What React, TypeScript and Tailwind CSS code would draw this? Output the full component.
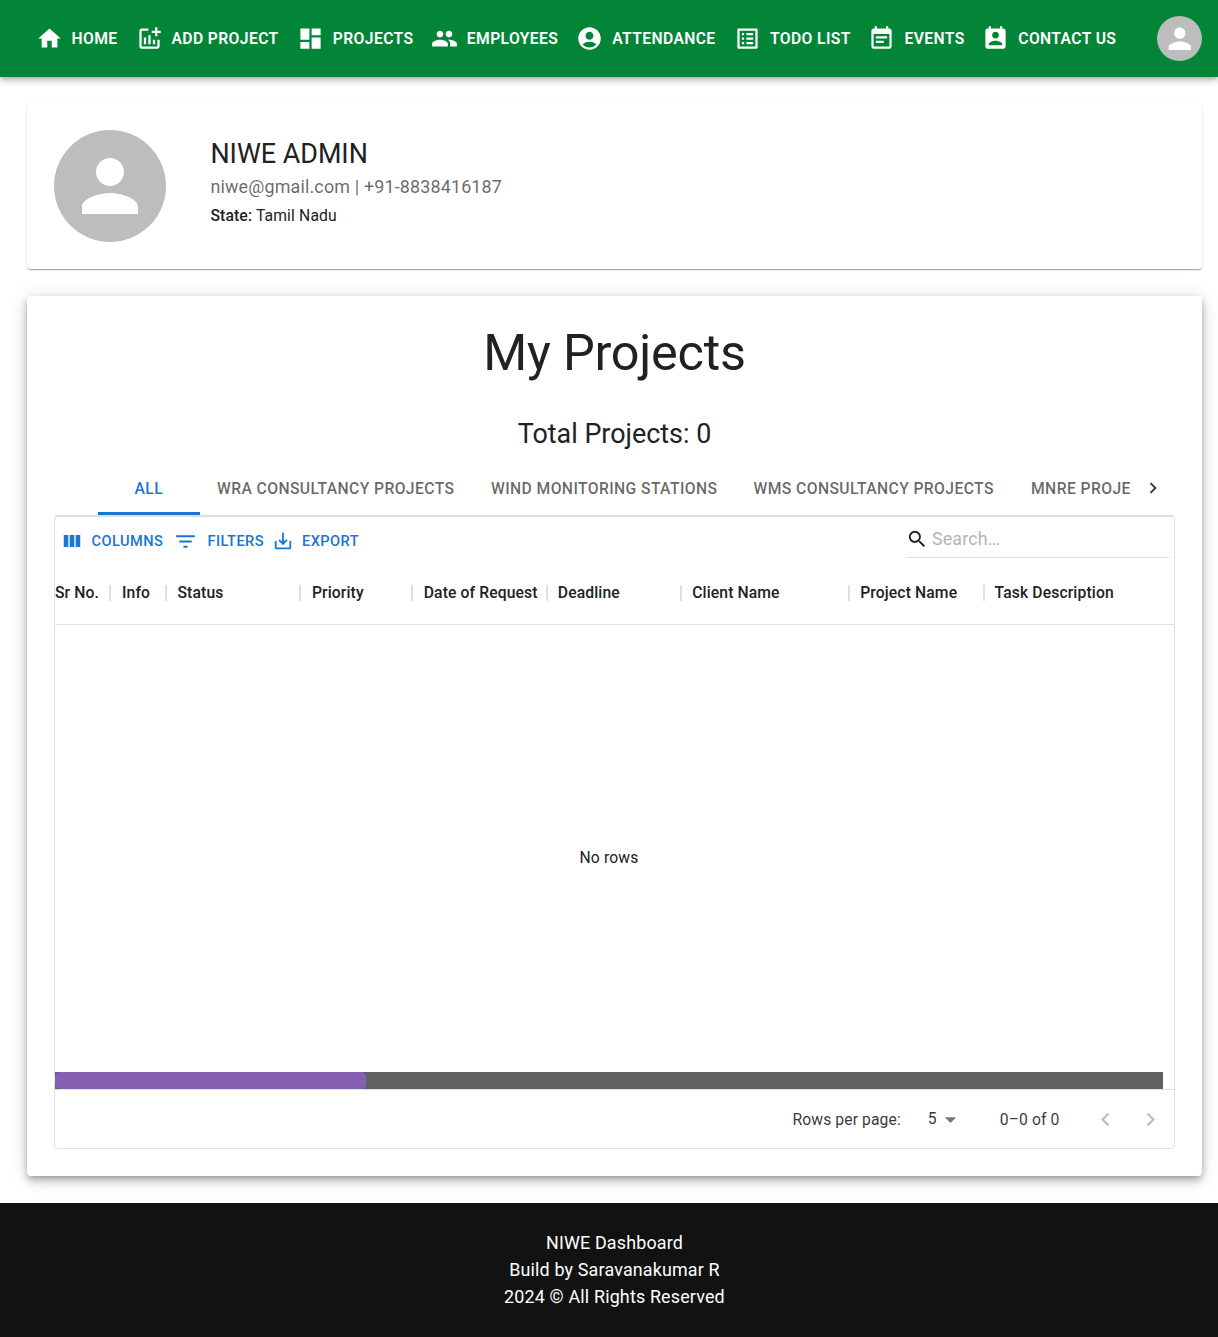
import {
  MdAccountCircle,
  MdAddchart,
  MdArrowDropDown,
  MdDashboard,
  MdEventNote,
  MdFilterList,
  MdHome,
  MdKeyboardArrowLeft,
  MdKeyboardArrowRight,
  MdListAlt,
  MdPeople,
  MdPermContactCalendar,
  MdPerson,
  MdSaveAlt,
  MdSearch,
} from "react-icons/md";

const navItems = [
  { label: "HOME", Icon: MdHome, width: "w-[100px]" },
  { label: "ADD PROJECT", Icon: MdAddchart, width: "w-[161.3px]" },
  { label: "PROJECTS", Icon: MdDashboard, width: "w-[134px]" },
  { label: "EMPLOYEES", Icon: MdPeople, width: "w-[145.4px]" },
  { label: "ATTENDANCE", Icon: MdAccountCircle, width: "w-[157.8px]" },
  { label: "TODO LIST", Icon: MdListAlt, width: "w-[134.5px]" },
  { label: "EVENTS", Icon: MdEventNote, width: "w-[113.8px]" },
  { label: "CONTACT US", Icon: MdPermContactCalendar, width: "w-[140px]" },
];

const tabs = [
  { label: "WRA CONSULTANCY PROJECTS", width: "w-[274px]" },
  { label: "WIND MONITORING STATIONS", width: "w-[262.5px]" },
  { label: "WMS CONSULTANCY PROJECTS", width: "w-[277.5px]" },
  { label: "MNRE PROJE", width: "w-[122px]" },
];

const columns = [
  { label: "Sr No.", width: "w-14", pad: "" },
  { label: "Info", width: "w-14", pad: "pl-[11px]" },
  { label: "Status", width: "w-[134.4px]", pad: "pl-[10.5px]" },
  { label: "Priority", width: "w-[112px]", pad: "pl-[10.5px]" },
  { label: "Date of Request", width: "w-[134.4px]", pad: "pl-[10.3px]" },
  { label: "Deadline", width: "w-[134.4px]", pad: "pl-[10px]" },
  { label: "Client Name", width: "w-[168px]", pad: "pl-[10px]" },
  { label: "Project Name", width: "w-[134.4px]", pad: "pl-[10px]" },
  { label: "Task Description", width: "w-[336px]", pad: "pl-[10px]" },
];

function ColumnsIcon() {
  return (
    <svg viewBox="0 0 24 24" className="size-[22px]" fill="currentColor">
      <path d="M3 5.5h5v13H3zM9.5 5.5h5v13h-5zM16 5.5h5v13h-5z" />
    </svg>
  );
}

function NavBar() {
  return (
    <header className="relative z-10 flex h-[77px] items-center bg-[#028536] pl-[35.5px] pr-4 text-white shadow-[0_2px_4px_-1px_rgba(0,0,0,0.2),0_4px_6px_rgba(0,0,0,0.14),0_1px_11px_rgba(0,0,0,0.12)]">
      <nav className="flex flex-1">
        {navItems.map(({ label, Icon, width }) => (
          <a key={label} className={`flex shrink-0 items-center gap-[9px] ${width}`}>
            <Icon className="size-[27px] shrink-0" />
            <span className="whitespace-nowrap text-[15.7px] font-semibold leading-6 tracking-[0.38px]">{label}</span>
          </a>
        ))}
      </nav>
      <div className="flex size-[45px] items-center justify-center rounded-full bg-[#bdbdbd]">
        <MdPerson className="size-[33.6px]" />
      </div>
    </header>
  );
}

function Profile() {
  return (
    <section className="flex h-[165px] rounded bg-white px-[26.6px] py-[26.4px] shadow-[0_2px_1px_-1px_rgba(0,0,0,0.2),0_1px_1px_rgba(0,0,0,0.14),0_1px_3px_rgba(0,0,0,0.12)]">
      <div className="flex size-28 shrink-0 items-center justify-center rounded-full bg-[#bdbdbd] text-white">
        <MdPerson className="size-[84px]" />
      </div>
      <div className="ml-[44.8px] pt-[5.6px]">
        <h1 className="text-[26.9px] leading-9">NIWE ADMIN</h1>
        <p className="text-[17.9px] leading-[30px] tracking-[0.17px] text-black/60">
          niwe@gmail.com | +91-8838416187
        </p>
        <p className="pt-[2px] text-[15.7px] leading-6 tracking-[0.14px]">
          <span className="font-medium">State:</span> Tamil Nadu
        </p>
      </div>
    </section>
  );
}

function Tabs() {
  return (
    <div className="flex h-[55px] items-stretch border-b border-black/12 text-[15.7px] font-medium tracking-[0.4px] text-black/60">
      <div className="ml-11 flex w-[1037px] overflow-hidden whitespace-nowrap">
        <div className="flex w-[101.5px] shrink-0 items-center justify-center border-b-[3px] border-[#1976d2] pt-[5px] text-[#1976d2]">
          ALL
        </div>
        {tabs.map((t) => (
          <div key={t.label} className={`flex shrink-0 items-center pl-[17.5px] pt-[2px] ${t.width}`}>
            {t.label}
          </div>
        ))}
      </div>
      <div className="flex w-11 items-center justify-center text-black/80">
        <MdKeyboardArrowRight className="size-[22px]" />
      </div>
    </div>
  );
}

function Toolbar() {
  return (
    <div className="flex h-11 items-start pl-[5.5px] pr-1 text-[14.6px] font-medium tracking-[0.44px] text-[#1976d2]">
      <button className="mt-[13px] flex h-[22px] w-[112px] items-center gap-[9px] leading-[22px]">
        <ColumnsIcon />
        COLUMNS
      </button>
      <button className="mt-[13px] flex h-[22px] w-[99px] items-center leading-[22px]">
        <MdFilterList className="mr-[10px] size-[25px]" />
        FILTERS
      </button>
      <button className="mt-[13px] flex h-[22px] items-center gap-[8.5px] leading-[22px]">
        <MdSaveAlt className="size-[22px]" />
        EXPORT
      </button>
      <label className="ml-auto flex h-[41px] w-[264px] items-center border-b border-black/12 pt-[3px] text-[17.9px] font-normal tracking-[0.17px] text-black/87">
        <MdSearch className="mt-px size-[22.4px] shrink-0" />
        <input
          placeholder="Search…"
          className="ml-[3.5px] w-full bg-transparent pt-px outline-none placeholder:text-[#b4b4b4]"
        />
      </label>
    </div>
  );
}

function Grid() {
  return (
    <div className="flex h-[633px] flex-col overflow-hidden rounded border border-[#e0e0e0]">
      <Toolbar />
      <div className="flex h-[64px] shrink-0 overflow-hidden border-b border-[#e0e0e0] text-[15.7px] font-medium tracking-[0.12px]">
        {columns.map((c) => (
          <div key={c.label} className={`flex shrink-0 items-center justify-between whitespace-nowrap ${c.width} ${c.pad}`}>
            {c.label}
            <span className="h-4 w-[2px] shrink-0 bg-[#e0e0e0]" />
          </div>
        ))}
      </div>
      <div className="flex flex-1 items-center justify-center pr-[11px] pt-[18px] text-[15.7px] tracking-[0.14px]">No rows</div>
      <div className="mr-[11px] h-[17px] bg-[#616161]">
        <div className="h-full w-[311px] rounded-[5px] bg-[#8860b3]" />
      </div>
      <div className="flex h-[59px] items-center justify-end border-t border-[#e0e0e0] pr-[10.5px] text-[15.7px] tracking-[0.1px] text-black/80">
        <span className="pt-px">Rows per page:</span>
        <span className="ml-[27px]">5</span>
        <MdArrowDropDown className="size-[27px] text-black/54" />
        <span className="ml-[36px] pt-px">0–0 of 0</span>
        <MdKeyboardArrowLeft className="ml-8 size-[27px] text-black/26" />
        <MdKeyboardArrowRight className="ml-[18px] size-[27px] text-black/26" />
      </div>
    </div>
  );
}

export default function App() {
  return (
    <div className="min-h-[1337px] bg-white font-[Roboto,sans-serif] text-[#212121]">
      <NavBar />
      <main className="pb-[27px] pl-[27px] pr-4 pt-[27px]">
        <Profile />
        <section className="mt-[27px] h-[880px] rounded bg-white px-[27px] shadow-[0_3px_6px_-1px_rgba(0,0,0,0.28),0_6px_11px_rgba(0,0,0,0.14),0_1px_20px_rgba(0,0,0,0.12)]">
          <h2 className="pt-[24px] text-center text-[50.4px] leading-[66px] tracking-[-0.25px]">My Projects</h2>
          <h3 className="mt-[30px] text-center text-[26.9px] leading-9">Total Projects: 0</h3>
          <div className="mt-[9px]">
            <Tabs />
            <Grid />
          </div>
        </section>
      </main>
      <footer className="h-[134px] bg-[#121212] pl-[11px] pt-[26px] text-center text-[17.9px] leading-[27px] tracking-[0.17px] text-white">
        <p>NIWE Dashboard</p>
        <p>Build by Saravanakumar R</p>
        <p>2024 © All Rights Reserved</p>
      </footer>
    </div>
  );
}
